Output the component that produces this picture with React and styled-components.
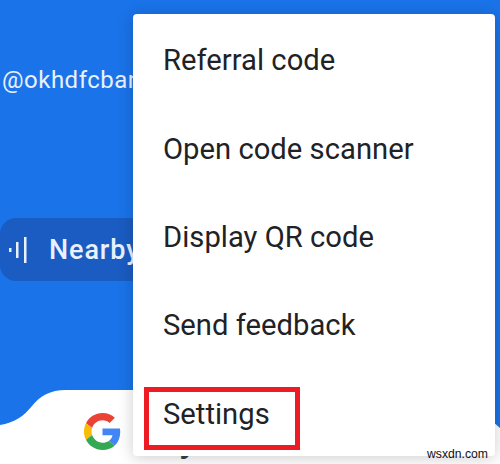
import React from 'react';
import styled, { createGlobalStyle } from 'styled-components';

const GlobalStyle = createGlobalStyle`
  html, body {
    margin: 0;
    padding: 0;
    background: #fff;
  }
`;

const Screen = styled.div`
  position: relative;
  display: flex;
  flex-direction: column;
  width: 500px;
  height: 464px;
  overflow: hidden;
  background-color: #1a73e8;
  font-family: Roboto, "Liberation Sans", sans-serif;
`;

const Handle = styled.div`
  margin-top: 64px;
  padding-left: 2px;
  font-size: 24px;
  line-height: 32px;
  letter-spacing: 0.5px;
  color: #e8f1fd;
  white-space: nowrap;
`;

const NearbyChip = styled.div`
  display: flex;
  align-items: center;
  gap: 18px;
  width: 200px;
  height: 63px;
  margin-top: 122px;
  padding-left: 9px;
  box-sizing: border-box;
  border-radius: 16px;
  background-color: #1a5cc2;
  color: #e8f1fd;
  font-size: 27px;
  font-weight: 500;
  letter-spacing: 0.9px;
`;

const Footer = styled.div`
  position: relative;
  display: flex;
  align-items: center;
  gap: 12px;
  height: 74px;
  margin-top: auto;
  padding: 8px 0 0 84px;
  box-sizing: border-box;
`;

const FooterWave = styled.svg`
  position: absolute;
  left: 0;
  top: 0;
`;

const GoogleMark = styled.svg`
  position: relative;
  flex: none;
`;

const PayText = styled.span`
  position: relative;
  margin-top: 14px;
  font-size: 40px;
  line-height: 44px;
  color: #3c4043;
`;

const Menu = styled.div`
  position: absolute;
  left: 133px;
  top: 14px;
  width: 362px;
  height: 442px;
  padding-top: 2px;
  box-sizing: border-box;
  overflow: hidden;
  border-radius: 4px;
  background-color: #fff;
  box-shadow: 0 2px 16px rgba(0, 0, 0, 0.2);
`;

const MenuItem = styled.div`
  position: relative;
  display: flex;
  align-items: center;
  height: 88.4px;
  padding-left: 30px;
  font-size: 29.2px;
  letter-spacing: 0.02px;
  color: #212225;
`;

const Highlight = styled.span`
  position: absolute;
  left: 11px;
  top: 17px;
  width: 156px;
  height: 63px;
  box-sizing: border-box;
  border: 5px solid #ed1c24;
`;

const Watermark = styled.span`
  position: absolute;
  right: 12px;
  bottom: 3px;
  font-family: "Liberation Sans", Arial, sans-serif;
  font-size: 12.2px;
  line-height: 14px;
  color: #111;
`;

const items = ['Referral code', 'Open code scanner', 'Display QR code', 'Send feedback', 'Settings'];

const BarsIcon = () => (
  <svg width="22" height="28" viewBox="0 0 22 28" fill="#e8f1fd">
    <rect x="0" y="12" width="2.5" height="4" />
    <rect x="7" y="6" width="2.5" height="16" />
    <rect x="15" y="1" width="2.5" height="26" />
  </svg>
);

const App = () => {
  return (
    <Screen>
      <GlobalStyle />
      <Handle>@okhdfcbank</Handle>
      <NearbyChip>
        <BarsIcon />
        Nearby
      </NearbyChip>
      <Footer>
        <FooterWave width="500" height="74" viewBox="0 0 500 74">
          <path
            fill="#fff"
            d="M0 35 C14 33 24 26 32 16 C40 6 50 0 66 0 L420 0 C450 0 480 20 500 38 L500 74 L0 74 Z"
          />
        </FooterWave>
        <GoogleMark width="37" height="37" viewBox="0 0 48 48">
          <path fill="#ea4335" d="M24 9.5c3.54 0 6.71 1.22 9.21 3.6l6.85-6.85C35.9 2.38 30.47 0 24 0 14.62 0 6.51 5.38 2.56 13.22l7.98 6.19C12.43 13.72 17.74 9.5 24 9.5z" />
          <path fill="#4285f4" d="M46.98 24.55c0-1.57-.15-3.09-.38-4.55H24v9.02h12.94c-.58 2.96-2.26 5.48-4.78 7.18l7.73 6c4.51-4.18 7.09-10.36 7.09-17.65z" />
          <path fill="#fbbc05" d="M10.53 28.59c-.48-1.45-.76-2.99-.76-4.59s.27-3.14.76-4.59l-7.98-6.19C.92 16.46 0 20.12 0 24c0 3.88.92 7.54 2.56 10.78l7.97-6.19z" />
          <path fill="#34a853" d="M24 48c6.48 0 11.93-2.13 15.89-5.81l-7.73-6c-2.15 1.45-4.92 2.3-8.16 2.3-6.26 0-11.57-4.22-13.47-9.91l-7.98 6.19C6.51 42.62 14.62 48 24 48z" />
        </GoogleMark>
        <PayText>Pay</PayText>
      </Footer>
      <Menu>
        {items.map((label) => (
          <MenuItem key={label}>
            {label}
            {label === 'Settings' && <Highlight />}
          </MenuItem>
        ))}
      </Menu>
      <Watermark>wsxdn.com</Watermark>
    </Screen>
  );
};

export default App;
